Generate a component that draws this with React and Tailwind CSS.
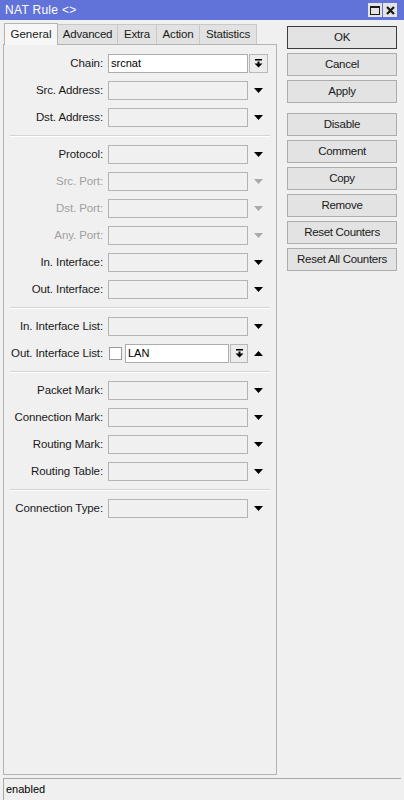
import React from "react";

const ROWS = [
  [
    { label: "Chain:", kind: "chain", value: "srcnat" },
    { label: "Src. Address:" },
    { label: "Dst. Address:" },
  ],
  [
    { label: "Protocol:" },
    { label: "Src. Port:", disabled: true },
    { label: "Dst. Port:", disabled: true },
    { label: "Any. Port:", disabled: true },
    { label: "In. Interface:" },
    { label: "Out. Interface:" },
  ],
  [
    { label: "In. Interface List:" },
    { label: "Out. Interface List:", kind: "list", value: "LAN" },
  ],
  [
    { label: "Packet Mark:" },
    { label: "Connection Mark:" },
    { label: "Routing Mark:" },
    { label: "Routing Table:" },
  ],
  [{ label: "Connection Type:" }],
];

const TABS = [
  { name: "General", w: "w-[54px]" },
  { name: "Advanced", w: "w-[60px]" },
  { name: "Extra", w: "w-[39px]" },
  { name: "Action", w: "w-[43px]" },
  { name: "Statistics", w: "w-[57px]" },
];

function ArrowDown({ gray }) {
  return (
    <svg width="9" height="5" viewBox="0 0 9 5">
      <polygon points="0,0 9,0 4.5,5" fill={gray ? "#aaaaaa" : "#000"} />
    </svg>
  );
}

function ArrowUp() {
  return (
    <svg width="9" height="5" viewBox="0 0 9 5">
      <polygon points="0,5 9,5 4.5,0" fill="#000" />
    </svg>
  );
}

// bar over a down arrow, used on the combo buttons
function ComboIcon() {
  return (
    <svg width="9" height="9" viewBox="0 0 9 9">
      <rect x="1" y="0" width="7" height="1.5" fill="#000" />
      <rect x="3.5" y="2.5" width="2" height="2.5" fill="#000" />
      <polygon points="0.5,4.5 8.5,4.5 4.5,8.5" fill="#000" />
    </svg>
  );
}

function Row({ row }) {
  const labelColor = row.disabled ? "text-[#a0a0a0]" : "text-[#1a1a1a]";
  return (
    <div className="flex items-center h-[19px]">
      <div className={`w-[99px] text-right whitespace-nowrap text-[11.5px] tracking-[-0.1px] ${labelColor}`}>
        {row.label}
      </div>
      {row.kind === "chain" && (
        <>
          <div className="ml-[5px] w-[140px] h-[19px] bg-white border border-[#acacac] flex items-center px-[2px]">
            {row.value}
          </div>
          <div className="ml-[1px] w-[19px] h-[19px] border border-[#b8b8b8] bg-[#ececec] flex items-center justify-center">
            <ComboIcon />
          </div>
        </>
      )}
      {row.kind === "list" && (
        <>
          <div className="ml-[6px] w-[13px] h-[13px] bg-white border border-[#9a9a9a]" />
          <div className="ml-[3px] w-[104px] h-[19px] bg-white border border-[#acacac] flex items-center px-[2px]">
            {row.value}
          </div>
          <div className="ml-[1px] w-[18px] h-[19px] border border-[#b8b8b8] bg-[#ececec] flex items-center justify-center">
            <ComboIcon />
          </div>
          <div className="w-[20px] flex justify-center">
            <ArrowUp />
          </div>
        </>
      )}
      {!row.kind && (
        <>
          <div className="ml-[5px] w-[140px] h-[19px] bg-[#f0f0f0] border border-[#b4b4b4]" />
          <div className="w-[20px] flex justify-center">
            <ArrowDown gray={row.disabled} />
          </div>
        </>
      )}
    </div>
  );
}

function Separator() {
  return <div className="mx-[6px] h-[2px] border-t border-[#d4d4d4] bg-white" />;
}

function Button({ children, primary, className = "" }) {
  return (
    <div
      className={`w-[110px] h-[23px] flex items-center justify-center bg-[#e3e3e3] border text-[#1a1a1a] ${
        primary ? "border-[#3c3c3c]" : "border-[#adadad]"
      } ${className}`}
    >
      {children}
    </div>
  );
}

export default function App() {
  return (
    <div className="w-[404px] h-[800px] bg-[#f0f0f0] flex flex-col overflow-hidden text-[11px] text-black font-['Liberation_Sans',Arial,sans-serif]">
      {/* title bar */}
      <div className="h-[20px] bg-[#6173d8] flex items-center pl-[5px] pr-[7px] text-white text-[12px] tracking-[0.3px]">
        <span className="flex-1">NAT Rule &lt;&gt;</span>
        <div className="flex gap-[1px]">
          <div className="w-[14px] h-[14px] bg-[#e4e4e4] flex items-center justify-center">
            <div className="w-[10px] h-[9px] border border-t-2 border-[#1a1a1a]" />
          </div>
          <div className="w-[14px] h-[14px] bg-[#e4e4e4] flex items-center justify-center">
            <svg width="9" height="9" viewBox="0 0 9 9">
              <path d="M1 1 L8 8 M8 1 L1 8" stroke="#1a1a1a" strokeWidth="2.2" />
            </svg>
          </div>
        </div>
      </div>

      <div className="flex-1 flex min-h-0">
        {/* tabs and form */}
        <div className="ml-[3px] w-[274px] flex flex-col pt-[2px] pb-[3px]">
          <div className="h-[22px] flex items-end pl-[1px]">
            {TABS.map((t, i) =>
              i === 0 ? (
                <div
                  key={t.name}
                  className={`${t.w} h-[22px] -mb-[1px] relative z-10 bg-[#f7f7f7] border border-b-0 border-[#b4b4b4] flex items-center justify-center text-[11.5px] text-[#1a1a1a]`}
                >
                  {t.name}
                </div>
              ) : (
                <div
                  key={t.name}
                  className={`${t.w} h-[20px] bg-[#e2e2e2] border border-l-0 border-b-0 border-[#c8c8c8] flex items-center justify-center text-[11.5px] tracking-[-0.2px] text-[#1a1a1a]`}
                >
                  {t.name}
                </div>
              )
            )}
          </div>
          <div className="flex-1 border border-[#b4b4b4] bg-[#f0f0f0] pt-[9px] flex flex-col gap-[8px]">
            {ROWS.map((group, gi) => (
              <React.Fragment key={gi}>
                {gi > 0 && <Separator />}
                {group.map((row) => (
                  <Row key={row.label} row={row} />
                ))}
              </React.Fragment>
            ))}
          </div>
        </div>

        {/* action buttons */}
        <div className="pl-[10px] pt-[6px] flex flex-col gap-[4px] text-[11.5px] tracking-[-0.3px]">
          <Button primary>OK</Button>
          <Button>Cancel</Button>
          <Button>Apply</Button>
          <Button className="mt-[6px]">Disable</Button>
          <Button>Comment</Button>
          <Button>Copy</Button>
          <Button>Remove</Button>
          <Button>Reset Counters</Button>
          <Button>Reset All Counters</Button>
        </div>
      </div>

      {/* status bar */}
      <div className="h-[22px] mx-[3px] border-t border-l border-[#a8a8a8] flex items-center pl-[2px]">
        enabled
      </div>
    </div>
  );
}
